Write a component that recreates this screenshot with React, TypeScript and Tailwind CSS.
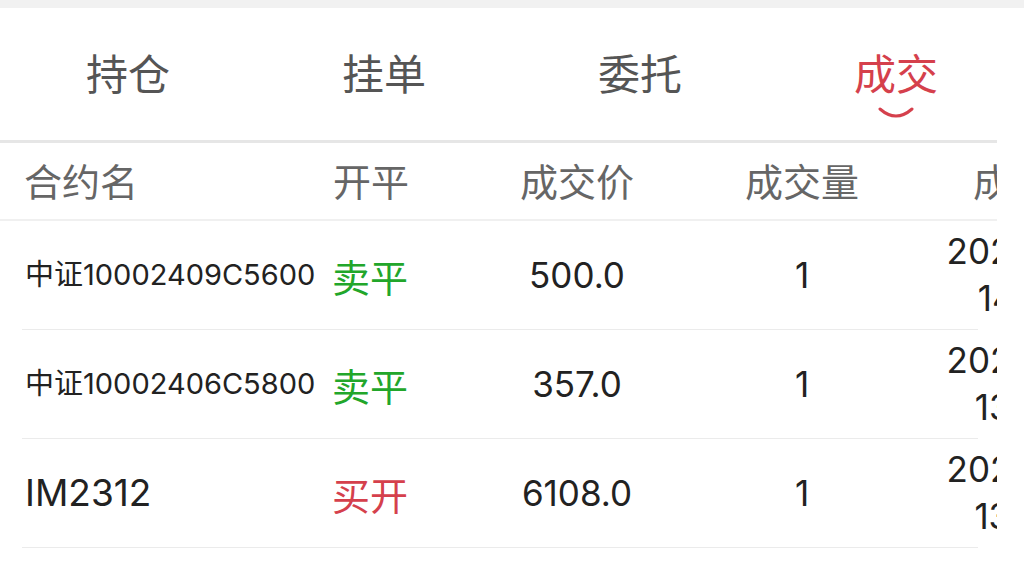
import React from 'react'

const tabs = ['持仓', '挂单', '委托', '成交']

const rows = [
  { name: '中证10002409C5600', small: true, side: '卖平', sell: true, price: '500.0', qty: '1', date: '2023-12-04', time: '14:31:20' },
  { name: '中证10002406C5800', small: true, side: '卖平', sell: true, price: '357.0', qty: '1', date: '2023-12-04', time: '13:52:08' },
  { name: 'IM2312', small: false, side: '买开', sell: false, price: '6108.0', qty: '1', date: '2023-12-04', time: '13:36:45' },
]

export default function App() {
  return (
    <div className="w-[1024px] h-[571px] overflow-hidden bg-white font-['Inter','Noto_Sans_CJK_SC',sans-serif]">
      <div className="h-2 bg-[#f1f1f1]" />

      {/* tabs */}
      <div className="grid grid-cols-4 h-[132px]">
        {tabs.map((t, i) => {
          const active = i === 3
          return (
            <div key={t} className="relative flex items-center justify-center">
              <span
                className={
                  'text-[42px] leading-none font-["Noto_Sans_CJK_SC",sans-serif] -mt-[5px] ' +
                  (active ? 'text-[#d5404c]' : 'text-[#555555]')
                }
              >
                {t}
              </span>
              {active && (
                <svg
                  className="absolute left-1/2 -translate-x-1/2 top-[98px]"
                  width="38"
                  height="14"
                  viewBox="0 0 38 14"
                >
                  <path d="M3 3 Q19 17 35 3" fill="none" stroke="#d5404c" strokeWidth="3" strokeLinecap="round" />
                </svg>
              )}
            </div>
          )
        })}
      </div>

      <div className="w-[997px] overflow-hidden">
        <div className="h-[3px] bg-[#e6e6e6]" />

        {/* header */}
        <div className="grid grid-cols-[330px_130px_234px_216px_280px] h-[78px] items-center border-b-2 border-[#f0f0f0] text-[38px] text-[#666666] font-['Noto_Sans_CJK_SC',sans-serif]">
          <div className="pl-[24px] -mt-[4px]">合约名</div>
          <div className="pl-[3px] -mt-[4px]">开平</div>
          <div className="text-center -mt-[4px]">成交价</div>
          <div className="text-center -mt-[4px]">成交量</div>
          <div className="text-center whitespace-nowrap -mt-[4px] pr-[2px]">成交时间</div>
        </div>

        {rows.map((r, i) => (
          <div key={i}>
            <div className="grid grid-cols-[330px_130px_234px_216px_280px] h-[108px] items-center text-[#222222]">
              <div className={'pl-[25px] whitespace-nowrap ' + (r.small ? 'text-[29px]' : 'text-[37px]')}>
                {r.name}
              </div>
              <div
                className={
                  'pl-[2px] text-[38px] font-["Noto_Sans_CJK_SC",sans-serif] ' +
                  (r.sell ? 'text-[#22a62a]' : 'text-[#d5404c]')
                }
              >
                {r.side}
              </div>
              <div className="text-center text-[35px]">{r.price}</div>
              <div className="text-center text-[35px]">{r.qty}</div>
              <div className="flex flex-col items-center pr-[8px] text-[35px] leading-[47px] whitespace-nowrap">
                <span>{r.date}</span>
                <span>{r.time}</span>
              </div>
            </div>
            <div className="ml-[22px] w-[956px] h-px bg-[#ebebeb]" />
          </div>
        ))}
      </div>
    </div>
  )
}
